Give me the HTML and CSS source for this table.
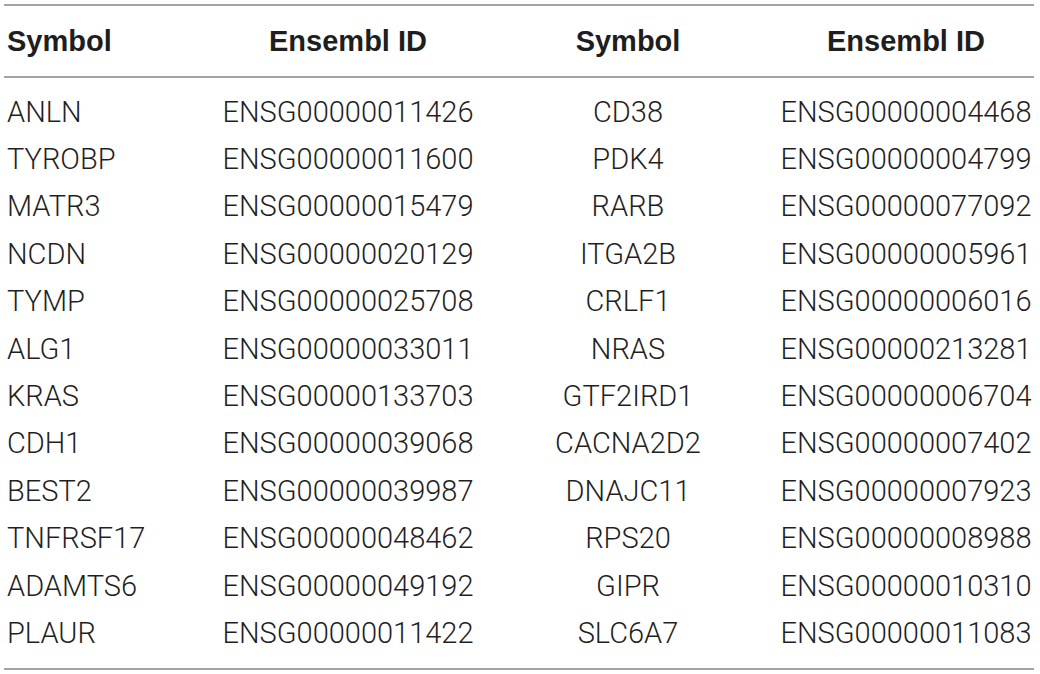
FILE: index.html
```html
<!DOCTYPE html>
<html>
<head>
<meta charset="utf-8">
<link rel="stylesheet" href="styles.css">
</head>
<body>
<div class="table">
  <div class="row head">
    <div class="c1">Symbol</div><div class="c2">Ensembl ID</div><div class="c3">Symbol</div><div class="c4">Ensembl ID</div>
  </div>
  <div class="body">
    <div class="row"><div class="c1">ANLN</div><div class="c2">ENSG00000011426</div><div class="c3">CD38</div><div class="c4">ENSG00000004468</div></div>
    <div class="row"><div class="c1">TYROBP</div><div class="c2">ENSG00000011600</div><div class="c3">PDK4</div><div class="c4">ENSG00000004799</div></div>
    <div class="row"><div class="c1">MATR3</div><div class="c2">ENSG00000015479</div><div class="c3">RARB</div><div class="c4">ENSG00000077092</div></div>
    <div class="row"><div class="c1">NCDN</div><div class="c2">ENSG00000020129</div><div class="c3">ITGA2B</div><div class="c4">ENSG00000005961</div></div>
    <div class="row"><div class="c1">TYMP</div><div class="c2">ENSG00000025708</div><div class="c3">CRLF1</div><div class="c4">ENSG00000006016</div></div>
    <div class="row"><div class="c1">ALG1</div><div class="c2">ENSG00000033011</div><div class="c3">NRAS</div><div class="c4">ENSG00000213281</div></div>
    <div class="row"><div class="c1">KRAS</div><div class="c2">ENSG00000133703</div><div class="c3">GTF2IRD1</div><div class="c4">ENSG00000006704</div></div>
    <div class="row"><div class="c1">CDH1</div><div class="c2">ENSG00000039068</div><div class="c3">CACNA2D2</div><div class="c4">ENSG00000007402</div></div>
    <div class="row"><div class="c1">BEST2</div><div class="c2">ENSG00000039987</div><div class="c3">DNAJC11</div><div class="c4">ENSG00000007923</div></div>
    <div class="row"><div class="c1">TNFRSF17</div><div class="c2">ENSG00000048462</div><div class="c3">RPS20</div><div class="c4">ENSG00000008988</div></div>
    <div class="row"><div class="c1">ADAMTS6</div><div class="c2">ENSG00000049192</div><div class="c3">GIPR</div><div class="c4">ENSG00000010310</div></div>
    <div class="row"><div class="c1">PLAUR</div><div class="c2">ENSG00000011422</div><div class="c3">SLC6A7</div><div class="c4">ENSG00000011083</div></div>
  </div>
</div>
</body>
</html>
```
FILE: styles.css
```css
html, body {
  margin: 0;
  padding: 0;
  background: #fff;
}
body {
  font-family: Roboto, "Liberation Sans", Arial, sans-serif;
  font-weight: 300;
  color: #1f1f1f;
}
.table {
  margin: 4px 0 0 4px;
  width: 1030px;
  border-top: 2px solid #a3a3a3;
  border-bottom: 2px solid #a3a3a3;
}
.row {
  display: grid;
  grid-template-columns: 206px 276px 284px 264px;
  align-items: center;
  font-size: 29px;
  height: 47.4px;
  white-space: nowrap;
}
.head {
  height: 70px;
  font-family: "Liberation Sans", Arial, sans-serif;
  font-weight: bold;
  font-size: 29px;
  color: #1e1e1e;
  border-bottom: 2px solid #a3a3a3;
}
.body {
  padding: 10px 0 11px;
}
.c1 {
  padding-left: 3px;
  text-align: left;
}
.c2, .c3 {
  text-align: center;
}
.c4 {
  text-align: center;
  padding-left: 8px;
}
```
